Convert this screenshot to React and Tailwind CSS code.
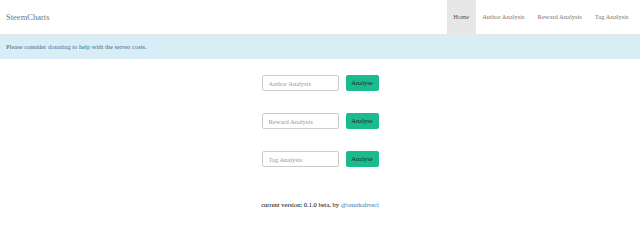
export default function App() {

    const forms = ["Author Analysis", "Reward Analysis", "Tag Analysis"];

    return (

        <div className="min-h-screen bg-white font-['Liberation_Serif',serif] text-[6.5px] text-[#333]">

            <nav className="h-[35px] flex items-stretch justify-between border-b border-[#e7e7e7] bg-white">

                <div className="flex items-center pl-[6px] text-[8.5px] text-[#777]">
                    SteemCharts
                </div>

                <ul className="flex items-stretch pr-[5px]">
                    <li className="flex items-center px-[6.5px] bg-[#e7e7e7] text-[#555]">Home</li>
                    <li className="flex items-center px-[6.5px] text-[#777]">Author Analysis</li>
                    <li className="flex items-center px-[6.5px] text-[#777]">Reward Analysis</li>
                    <li className="flex items-center px-[6.5px] text-[#777]">Tag Analysis</li>
                </ul>

            </nav>

            <div className="h-[24px] flex items-center pl-[6px] bg-[#d9edf7] text-[#31708f]">
                <p>
                    Please consider <a className="text-[#337ab7]">donating</a> to help with the server costs.
                </p>
            </div>

            <div className="flex flex-col items-center gap-[22px] pt-[16px]">

                {forms.map(name => (

                    <div key={name} className="flex items-center gap-[7px]">

                        <input
                            placeholder={name}
                            className="w-[77px] h-[16px] px-[6px] border border-[#ccc] rounded-[2px] text-[6.5px] placeholder:text-[#999] outline-none"
                        />

                        <button className="w-[33px] h-[16px] rounded-[2px] bg-[#1abc8f] text-[#222] text-[6.5px]">
                            Analyse
                        </button>

                    </div>

                ))}

            </div>

            <p className="mt-[33px] text-center text-black">
                current version: 0.1.0 beta, by <a className="text-[#337ab7]">@onurkahveci</a>
            </p>

        </div>

    );

}
